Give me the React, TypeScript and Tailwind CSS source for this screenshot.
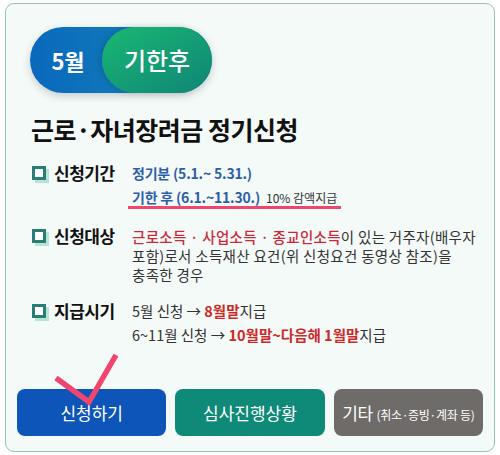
import React from "react";

function Box() {
  return (
    <span className="relative inline-block w-[14px] h-[14px] shrink-0">
      <span className="absolute left-[3px] top-[3px] w-[14px] h-[14px] bg-[#b5e6d3]" />
      <span className="absolute left-0 top-0 w-[14px] h-[14px] border-[3px] border-[#2a7d76] bg-white" />
    </span>
  );
}

function Row({ label, children }: { label: string; children: React.ReactNode }) {
  return (
    <div className="flex items-start">
      <div className="flex items-center w-[100px] shrink-0 h-[18px]">
        <Box />
        <span className="ml-[8px] text-[17px] leading-[18px] font-bold text-[#111] tracking-[-0.5px]">{label}</span>
      </div>
      <div className="flex-1 text-[14px] leading-[18px] text-[#333]">{children}</div>
    </div>
  );
}

export default function App() {
  return (
    <div
      className="w-[500px] h-[455px] bg-white pt-[3px] pl-[5px]"
      style={{ fontFamily: '"Noto Sans CJK KR", "Noto Sans", sans-serif' }}
    >
      <div className="relative w-[490px] h-[449px] rounded-[9px] border border-[#94c4b4] bg-[#f3faf8] px-[11px] pt-[23px]">
        <div className="pl-[13px]">
          <div className="relative flex w-[182px] h-[66px] rounded-full bg-gradient-to-r from-[#0a68bd] to-[#1b86b4] shadow-[0_3px_8px_rgba(0,0,0,0.18)]">
            <div className="w-[72px] flex items-center justify-center text-white text-[22px] font-bold pl-[4px]">5월</div>
            <div className="absolute right-0 top-0 h-[66px] w-[110px] rounded-full bg-gradient-to-br from-[#1ab872] to-[#108575] flex items-center justify-center text-white text-[24px] font-medium shadow-[-3px_0_6px_rgba(0,0,0,0.12)]">
              기한후
            </div>
          </div>

          <h1 className="mt-[18px] text-[25px] font-bold text-[#111] leading-[36px] tracking-[-0.5px] pl-[1px]">
            근로·자녀장려금 정기신청
          </h1>

          <div className="mt-[17px] pl-[2px] flex flex-col">
            <Row label="신청기간">
              <div className="text-[#2f5ea8] font-semibold tracking-[-0.2px]">정기분 (5.1.~ 5.31.)</div>
              <div className="mt-[7px] inline-flex items-baseline leading-[16px] border-b-[3px] border-[#f0456c] pr-[4px] -ml-[4px] pl-[4px]">
                <span className="text-[#2f5ea8] font-semibold tracking-[-0.2px]">기한 후 (6.1.~11.30.)</span>
                <span className="ml-[6px] text-[12px] text-[#333]">10% 감액지급</span>
              </div>
            </Row>

            <div className="mt-[18px]">
              <Row label="신청대상">
                <div className="text-[14.5px] leading-[19px] tracking-[0.3px]">
                  <span className="text-[#cc2a3a] font-medium">근로소득 · 사업소득 · 종교인소득</span>이 있는 거주자(배우자
                  <br />
                  포함)로서 소득재산 요건(위 신청요건 동영상 참조)을
                  <br />
                  충족한 경우
                </div>
              </Row>
            </div>

            <div className="mt-[18px]">
              <Row label="지급시기">
                <div className="text-[14.5px]">
                  <div>
                    5월 신청 → <span className="text-[#cc2a2a] font-bold">8월말</span>지급
                  </div>
                  <div className="mt-[6px]">
                    6~11월 신청 → <span className="text-[#cc2a2a] font-bold">10월말~다음해 1월말</span>지급
                  </div>
                </div>
              </Row>
            </div>
          </div>
        </div>

        <div className="absolute left-[11px] right-[11px] bottom-[15px] grid grid-cols-3 gap-[9px]">
          <button className="h-[47px] rounded-[8px] bg-[#0d55b8] text-white text-[17px]">신청하기</button>
          <button className="h-[47px] rounded-[8px] bg-[#0f8a78] text-white text-[17px]">심사진행상황</button>
          <button className="h-[47px] rounded-[8px] bg-[#6e6b69] text-white text-[17px] whitespace-nowrap tracking-[-0.3px]">
            기타 <span className="text-[12px]">(취소·증빙·계좌 등)</span>
          </button>
        </div>

        <svg className="absolute left-[45px] top-[345px]" width="75" height="60" viewBox="0 0 75 60">
          <polyline
            points="5,29 38,53 65,6"
            fill="none"
            stroke="#f0456c"
            strokeWidth="5.5"
            strokeLinecap="butt"
            strokeLinejoin="miter"
          />
        </svg>
      </div>
    </div>
  );
}
